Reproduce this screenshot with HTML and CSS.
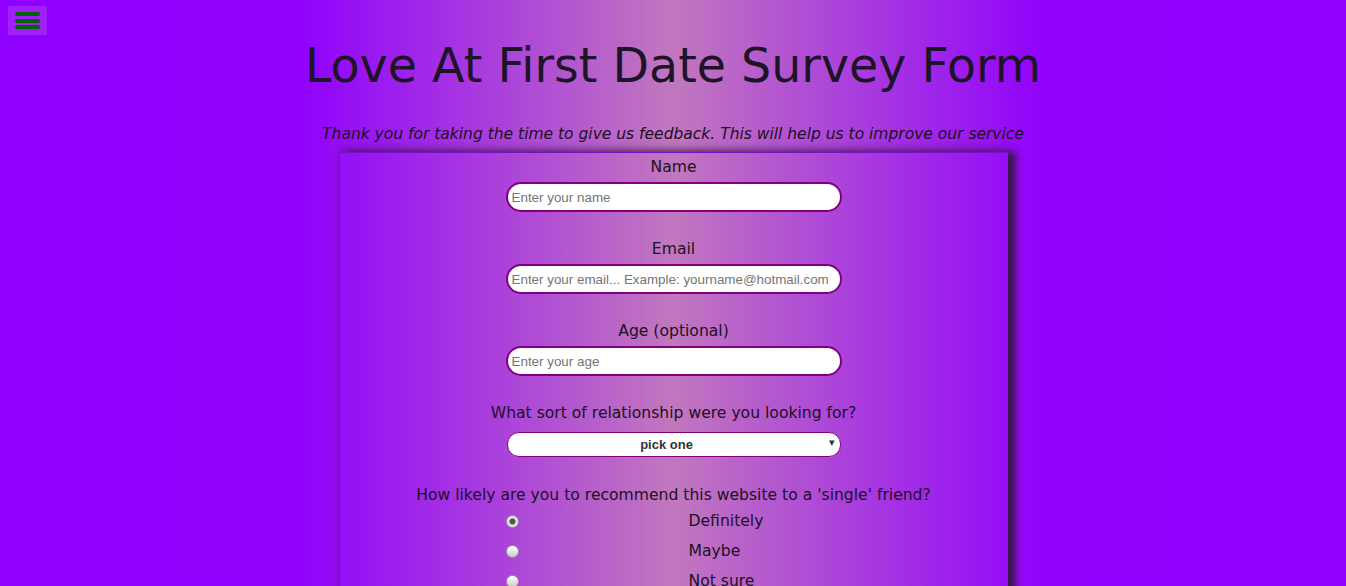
FILE: index.html
```html
<!DOCTYPE html>
<html lang="en">
<head>
<meta charset="utf-8">
<title>Love At First Date Survey Form</title>
<link rel="stylesheet" href="styles.css">
</head>
<body>
<button class="menu-btn" aria-label="menu">
  <span class="bar"></span><span class="bar"></span><span class="bar"></span>
</button>
<header class="page-header">
  <h1 class="title">Love At First Date Survey Form</h1>
  <p class="subtitle">Thank you for taking the time to give us feedback. This will help us to improve our service</p>
</header>
<form class="survey">
  <div class="field">
    <label class="label" for="name">Name</label>
    <input class="text-input" id="name" type="text" placeholder="Enter your name">
  </div>
  <div class="field">
    <label class="label" for="email">Email</label>
    <input class="text-input" id="email" type="email" placeholder="Enter your email... Example: yourname@hotmail.com">
  </div>
  <div class="field">
    <label class="label" for="age">Age (optional)</label>
    <input class="text-input" id="age" type="text" placeholder="Enter your age">
  </div>
  <div class="field field-select">
    <label class="label" for="rel">What sort of relationship were you looking for?</label>
    <div class="select-wrap">
      <select class="select" id="rel">
        <option>pick one</option>
      </select>
      <span class="arrow">&#9662;</span>
    </div>
  </div>
  <div class="field">
    <p class="label">How likely are you to recommend this website to a 'single' friend?</p>
    <div class="radios">
      <input class="radio" type="radio" name="rec" id="r1" checked><label class="radio-label" for="r1">Definitely</label>
      <input class="radio" type="radio" name="rec" id="r2"><label class="radio-label" for="r2">Maybe</label>
      <input class="radio" type="radio" name="rec" id="r3"><label class="radio-label" for="r3">Not sure</label>
    </div>
  </div>
</form>
</body>
</html>
```
FILE: styles.css
```css
html, body {
  margin: 0;
  padding: 0;
}
body {
  min-height: 586px;
  background: linear-gradient(90deg, #8f00ff 0%, #9000fd 22%, #c178be 50%, #9000fd 78%, #8f00ff 100%);
  font-family: "DejaVu Sans", sans-serif;
  color: #1c1024;
}
.menu-btn {
  position: absolute;
  left: 8px;
  top: 6px;
  width: 39px;
  height: 29px;
  background: #a020f8;
  border: none;
  padding: 6px 7px;
  display: flex;
  flex-direction: column;
  justify-content: space-between;
  box-sizing: border-box;
}
.bar {
  display: block;
  width: 25px;
  height: 4px;
  border-radius: 2px;
  background: #006400;
}
.page-header {
  text-align: center;
  padding-top: 34px;
}
.title {
  margin: 0;
  font-size: 47.5px;
  font-weight: normal;
  line-height: 64px;
  color: #1e1428;
}
.subtitle {
  margin: 26px 0 0;
  font-style: italic;
  font-size: 15.5px;
  line-height: 20px;
}
.survey {
  width: 669px;
  margin: 8px auto 0;
  border-left: 1px solid #7a10c0;
  border-top: 1px solid #7a10c0;
  box-shadow: 8px 0 7px rgba(45, 25, 55, 0.85), 0 -3px 8px rgba(60, 20, 80, 0.35);
  display: flex;
  flex-direction: column;
  align-items: center;
  padding-top: 4px;
  min-height: 440px;
  box-sizing: border-box;
}
.field {
  display: flex;
  flex-direction: column;
  align-items: center;
  margin-bottom: 27px;
}
.field-select {
  margin-bottom: 28px;
}
.field-select .label {
  margin-bottom: 8px;
}
.label {
  margin: 0 0 4px;
  font-size: 15.6px;
  line-height: 21px;
  text-align: center;
}
.text-input {
  width: 336px;
  height: 30px;
  box-sizing: border-box;
  border: 2px solid #800080;
  border-radius: 15px;
  padding: 0 4px;
  font-family: "Liberation Sans", Arial, sans-serif;
  font-size: 13.4px;
  background: #fff;
}
.text-input::placeholder {
  color: #757575;
}
.select-wrap {
  position: relative;
  width: 334px;
}
.select {
  appearance: none;
  width: 334px;
  height: 25px;
  border: 1px solid #800080;
  border-radius: 12px;
  background: #fff;
  padding: 0 14px 0 0;
  text-align: center;
  text-align-last: center;
  font-family: "Liberation Sans", Arial, sans-serif;
  font-weight: bold;
  font-size: 13px;
  color: #333;
}
.arrow {
  position: absolute;
  right: 6px;
  top: 4px;
  font-size: 11px;
  color: #333;
  pointer-events: none;
}
.radios {
  display: grid;
  grid-template-columns: 14px auto;
  column-gap: 169px;
  row-gap: 12px;
  align-items: center;
  width: 336px;
  margin-top: 2px;
}
.radio {
  appearance: none;
  margin: 0;
  width: 13px;
  height: 13px;
  border-radius: 50%;
  border: 1px solid #9a9a9a;
  background: linear-gradient(180deg, #ffffff 0%, #e0e0e0 60%, #c8c8c8 100%);
  box-sizing: border-box;
}
.radio:checked {
  background: radial-gradient(circle, #555 0, #555 2.5px, #dcdcdc 3.5px, #f4f4f4 100%);
}
.radio-label {
  font-size: 15.6px;
  line-height: 18px;
}
```
